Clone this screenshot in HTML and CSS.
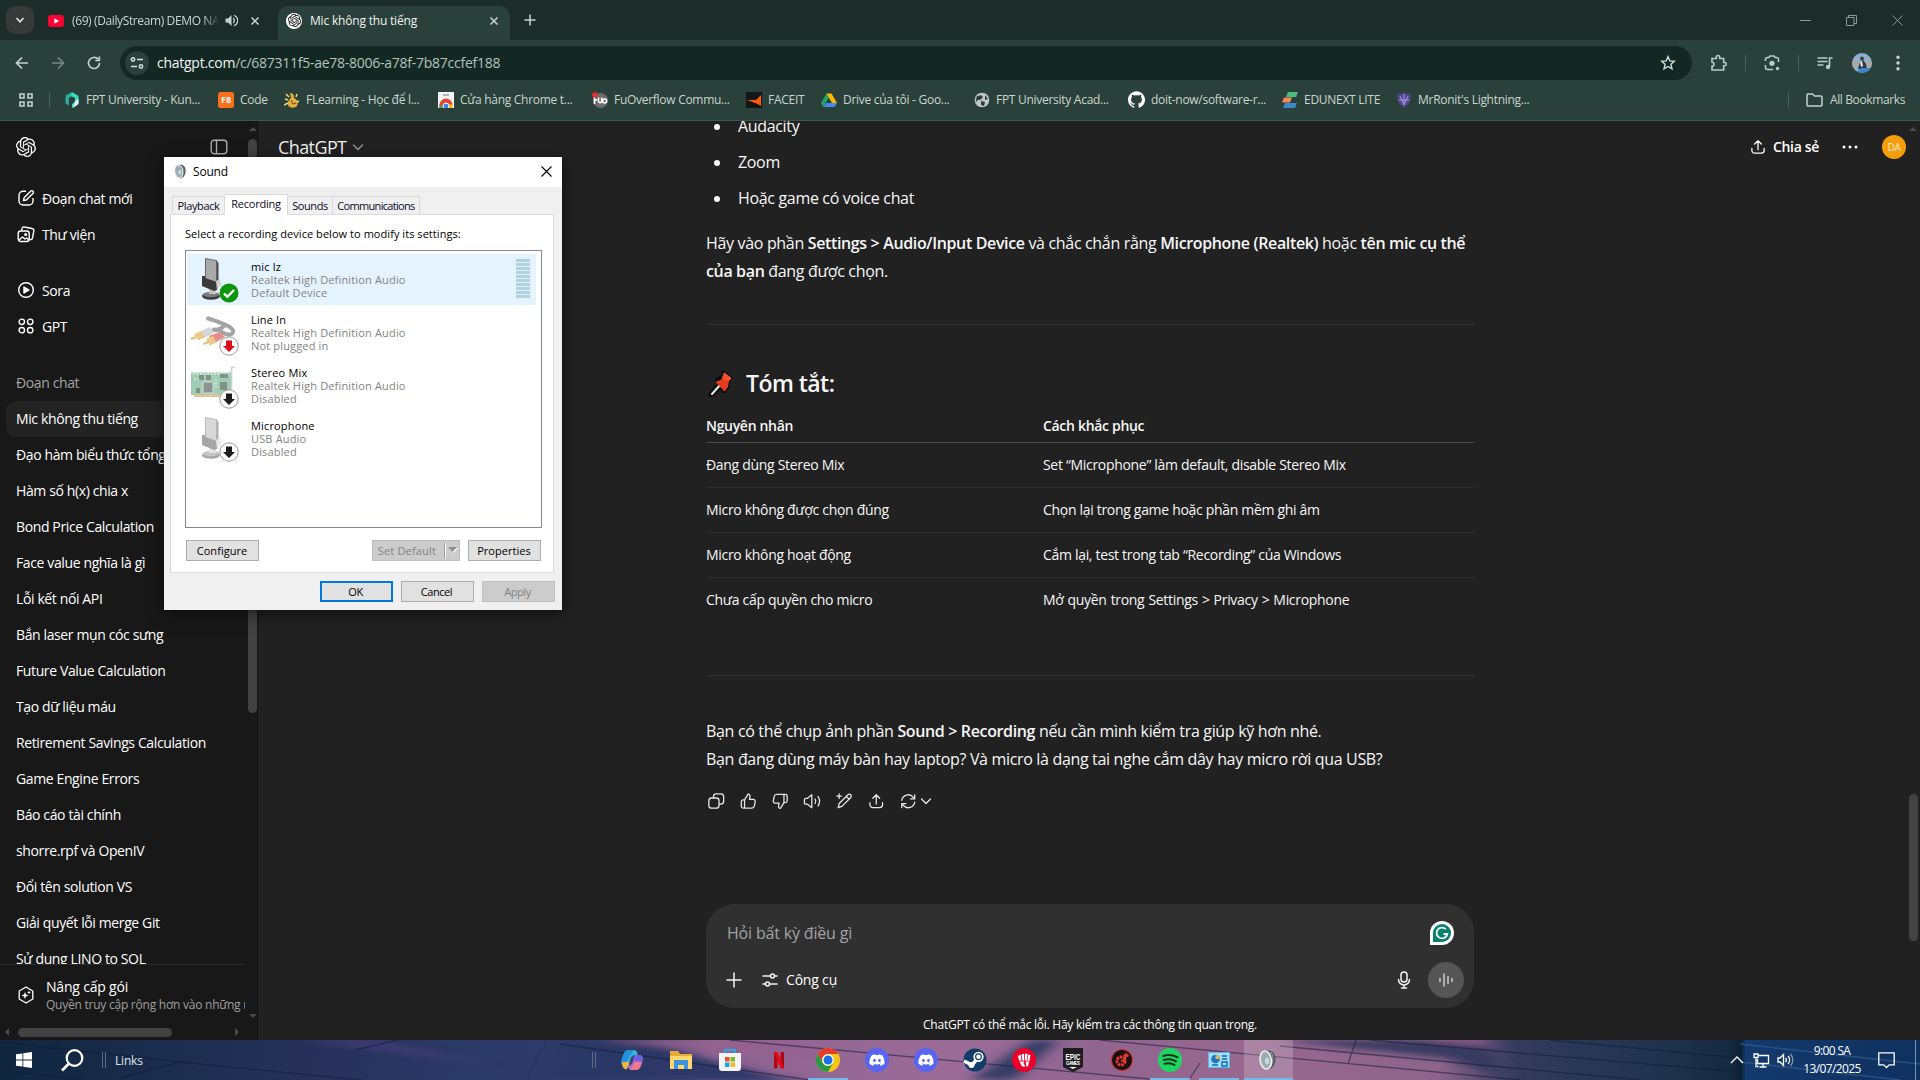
FILE: index.html
```html
<!DOCTYPE html>
<html lang="vi">
<head>
<meta charset="utf-8">
<title>Mic không thu tiếng</title>
<link rel="stylesheet" href="styles.css">
</head>
<body>
<svg class="defs" aria-hidden="true">
  <symbol id="openai" viewBox="0 0 24 24"><path fill="currentColor" d="M22.2819 9.8211a5.9847 5.9847 0 0 0-.5157-4.9108 6.0462 6.0462 0 0 0-6.5098-2.9A6.0651 6.0651 0 0 0 4.9807 4.1818a5.9847 5.9847 0 0 0-3.9977 2.9 6.0462 6.0462 0 0 0 .7427 7.0966 5.98 5.98 0 0 0 .511 4.9107 6.051 6.051 0 0 0 6.5146 2.9001A5.9847 5.9847 0 0 0 13.2599 24a6.0557 6.0557 0 0 0 5.7718-4.2058 5.9894 5.9894 0 0 0 3.9977-2.9001 6.0557 6.0557 0 0 0-.7475-7.0729zm-9.022 12.6081a4.4755 4.4755 0 0 1-2.8764-1.0408l.1419-.0804 4.7783-2.7582a.7948.7948 0 0 0 .3927-.6813v-6.7369l2.02 1.1686a.071.071 0 0 1 .038.052v5.5826a4.504 4.504 0 0 1-4.4945 4.4944zm-9.6607-4.1254a4.4708 4.4708 0 0 1-.5346-3.0137l.142.0852 4.783 2.7582a.7712.7712 0 0 0 .7806 0l5.8428-3.3685v2.3324a.0804.0804 0 0 1-.0332.0615L9.74 19.9502a4.4992 4.4992 0 0 1-6.1408-1.6464zM2.3408 7.8956a4.485 4.485 0 0 1 2.3655-1.9728V11.6a.7664.7664 0 0 0 .3879.6765l5.8144 3.3543-2.0201 1.1685a.0757.0757 0 0 1-.071 0l-4.8303-2.7865A4.504 4.504 0 0 1 2.3408 7.872zm16.5963 3.8558L13.1038 8.364 15.1192 7.2a.0757.0757 0 0 1 .071 0l4.8303 2.7913a4.4944 4.4944 0 0 1-.6765 8.1042v-5.6772a.79.79 0 0 0-.407-.667zm2.0107-3.0231l-.142-.0852-4.7735-2.7818a.7759.7759 0 0 0-.7854 0L9.409 9.2297V6.8974a.0662.0662 0 0 1 .0284-.0615l4.8303-2.7866a4.4992 4.4992 0 0 1 6.6802 4.66zM8.3065 12.863l-2.02-1.1638a.0804.0804 0 0 1-.038-.0567V6.0742a4.4992 4.4992 0 0 1 7.3757-3.4537l-.142.0805L8.704 5.459a.7948.7948 0 0 0-.3927.6813zm1.0976-2.3654l2.602-1.4998 2.6069 1.4998v2.9994l-2.5974 1.4997-2.6067-1.4997Z"/></symbol>
  <symbol id="discord" viewBox="0 0 24 24"><circle cx="12" cy="12" r="12" fill="#5865f2"/><path transform="translate(4.4 4.4) scale(.63)" fill="#fff" d="M20.317 4.3698a19.7913 19.7913 0 00-4.8851-1.5152.0741.0741 0 00-.0785.0371c-.211.3753-.4447.8648-.6083 1.2495-1.8447-.2762-3.68-.2762-5.4868 0-.1636-.3933-.4058-.8742-.6177-1.2495a.077.077 0 00-.0785-.037 19.7363 19.7363 0 00-4.8852 1.515.0699.0699 0 00-.0321.0277C.5334 9.0458-.319 13.5799.0992 18.0578a.0824.0824 0 00.0312.0561c2.0528 1.5076 4.0413 2.4228 5.9929 3.0294a.0777.0777 0 00.0842-.0276c.4616-.6304.8731-1.2952 1.226-1.9942a.076.076 0 00-.0416-.1057c-.6528-.2476-1.2743-.5495-1.8722-.8923a.077.077 0 01-.0076-.1277c.1258-.0943.2517-.1923.3718-.2914a.0743.0743 0 01.0776-.0105c3.9278 1.7933 8.18 1.7933 12.0614 0a.0739.0739 0 01.0785.0095c.1202.099.246.1981.3728.2924a.077.077 0 01-.0066.1276 12.2986 12.2986 0 01-1.873.8914.0766.0766 0 00-.0407.1067c.3604.698.7719 1.3628 1.225 1.9932a.076.076 0 00.0842.0286c1.961-.6067 3.9495-1.5219 6.0023-3.0294a.077.077 0 00.0313-.0552c.5004-5.177-.8382-9.6739-3.5485-13.6604a.061.061 0 00-.0312-.0286zM8.02 15.3312c-1.1825 0-2.1569-1.0857-2.1569-2.419 0-1.3332.9555-2.4189 2.157-2.4189 1.2108 0 2.1757 1.0952 2.1568 2.419 0 1.3332-.9555 2.4189-2.1569 2.4189zm7.9748 0c-1.1825 0-2.1569-1.0857-2.1569-2.419 0-1.3332.9554-2.4189 2.1569-2.4189 1.2108 0 2.1757 1.0952 2.1568 2.419 0 1.3332-.946 2.4189-2.1568 2.4189Z"/></symbol>
  <symbol id="close" viewBox="0 0 10 10"><path d="M1.5 1.5l7 7m0-7l-7 7" stroke="currentColor" stroke-width="1.5"/></symbol>
  <symbol id="share" viewBox="0 0 20 20"><path d="M10 13V3.2M6.3 6.7L10 3l3.7 3.7M3.2 11.5v2.3a3 3 0 0 0 3 3h7.600a3 3 0 0 0 3-3v-2.300" fill="none" stroke="currentColor" stroke-width="1.4" stroke-linecap="round" stroke-linejoin="round"/></symbol>
  <symbol id="chev" viewBox="0 0 12 12"><path d="M1.500 4L6 8.500 10.500 4" fill="none" stroke="currentColor" stroke-width="1.300" stroke-linecap="round"/></symbol>
  <symbol id="speaker" viewBox="0 0 20 24">
    <path d="M8 1.500C15 0 19 4 19 11c0 7-5 12-9 12z" fill="#4c5357"/>
    <path d="M13 3c4 2 5 12-1 18" fill="none" stroke="#8f9699" stroke-width="1.500"/>
    <ellipse cx="8" cy="12" rx="6.500" ry="10.500" transform="rotate(-8 8 12)" fill="#a9b3b5" stroke="#f2f3f3" stroke-width="1.600"/>
    <ellipse cx="8.500" cy="12" rx="4.500" ry="8" transform="rotate(-8 9 12)" fill="#9aa9af"/>
    <ellipse cx="9.500" cy="13" rx="2.500" ry="4" fill="#c3dbe6"/>
  </symbol>
  <symbol id="micdev" viewBox="0 0 50 50">
    <ellipse cx="24" cy="42" rx="9" ry="3.800" fill="#3d3d3d"/><ellipse cx="24" cy="40.600" rx="8" ry="2.600" fill="#7d7d7d"/>
    <path d="M22 33h7v7h-7z" fill="#c4c4c4"/>
    <path d="M18 5l12 1.500 1.500 3V32l-3 1-10.500-5z" fill="#4d4d4d"/>
    <path d="M18.500 4.500l11 2V29l-11-4z" fill="#a9a9a9" stroke="#5e5e5e" stroke-width=".8"/>
    <path d="M15 22l3 0 0 2 12 4 1 3-1 5-3 1-12-5z" fill="#3a3a3a"/><path d="M29 27l4-2 1 6-4 5z" fill="#d0d0d0"/>
  </symbol>
  <symbol id="rca" viewBox="0 0 50 50">
    <path d="M21 11.500c8 2 14 5 19 7 7 3 8 8 3 9-7 1-10-6-16-5M27 23c6 0 8-2 11-5" fill="none" stroke="#a3a3a3" stroke-width="4" stroke-linecap="round"/>
    <path d="M12 25l11-5 4 6-12 6z" fill="#d4d4da"/><path d="M22 29l11-4 5 5-12 7z" fill="#e58d86"/>
    <path d="M7 27.500l7-3.500 3.500 6-6 3.500z" fill="#ecc984"/><path d="M19 32l7-3 3 6-6 3.500z" fill="#ecc984"/>
    <path d="M3.500 31l5-2 1 2-5 2zM16 36l5-2 1 2-5 2z" fill="#dfbd7c"/>
  </symbol>
  <symbol id="card" viewBox="0 0 50 50">
    <path d="M44.500 7v22M44.500 7.500H48" stroke="#d2d2d2" stroke-width="1.600" fill="none"/>
    <path d="M4 12.500h40V35H4z" fill="#9fceb4"/><path d="M7 34.500h28V37H7z" fill="#e5c496"/>
    <path d="M6 14h36M7 19h7M29 19v10M26 24h4" stroke="#d4ecdd" stroke-width="1.500" stroke-dasharray="2 1.500"/>
    <path d="M16 22h10v11H16z" fill="#8c9490" stroke="#d9dfdb"/><path d="M12 15h5v5h-5zM19 15h5v5h-5zM33 22h7v8h-7zM33 14h8v4h-8zM9 28h4v5H9z" fill="#839089"/>
  </symbol>
</svg>

<header class="browser">
  <div class="tabstrip">
    <div class="tabsearch"><svg width="10" height="10" viewBox="0 0 10 10"><path d="M1.500 3L5 6.800 8.500 3" fill="none" stroke="#dfe8e4" stroke-width="1.600"/></svg></div>
    <div class="tab tab-idle">
      <svg width="16" height="16" viewBox="0 0 16 16"><rect y="2" width="16" height="12" rx="3.200" fill="#ff0033"/><path d="M6.300 5.300v5.400L11 8z" fill="#fff"/></svg>
      <span class="tab-title fade">(69) (DailyStream) DEMO NA</span>
      <svg class="tab-audio" width="13" height="13" viewBox="0 0 13 13"><path d="M.5 4.500H3L6.500 1v11L3 8.500H.5z" fill="#c3d3cc"/><path d="M8.300 4a3.500 3.500 0 0 1 0 5M9 1.300a5.500 5.500 0 0 1 0 10.400" fill="none" stroke="#c3d3cc" stroke-width="1.300"/></svg>
      <svg class="x" width="10" height="10"><use href="#close"/></svg>
    </div>
    <div class="tab tab-active">
      <span class="favicon"><svg width="13" height="13"><use href="#openai"/></svg></span>
      <span class="tab-title">Mic không thu tiếng</span>
      <svg class="x" width="10" height="10"><use href="#close"/></svg>
    </div>
    <svg class="newtab" width="12" height="12" viewBox="0 0 12 12"><path d="M6 .5v11M.5 6h11" stroke="#c9d6d0" stroke-width="1.500"/></svg>
    <div class="winctl">
      <svg width="11" height="11" viewBox="0 0 11 11"><path d="M0 5.500h11"/></svg>
      <svg width="11" height="11" viewBox="0 0 11 11"><path d="M.5 2.500h7.500v8H.5zM2.500 2.500v-2h8v8H8"/></svg>
      <svg width="11" height="11" viewBox="0 0 11 11"><path d="M.5.500l10 10m0-10l-10 10"/></svg>
    </div>
  </div>
  <div class="toolbar">
    <div class="nav">
      <svg width="16" height="16" viewBox="0 0 16 16"><path d="M14 8H3M8 2.500L2.500 8 8 13.500"/></svg>
      <svg class="dim" width="16" height="16" viewBox="0 0 16 16"><path d="M2 8h11M8 2.500L13.500 8 8 13.500"/></svg>
      <svg width="16" height="16" viewBox="0 0 16 16"><path d="M13.500 8A5.500 5.500 0 1 1 12 4.200M13.300 1.500V5.500H9.300"/></svg>
    </div>
    <div class="omnibox">
      <span class="site"><svg width="14" height="14" viewBox="0 0 14 14"><path d="M7 3.500h6M1 10.500h6" /><circle cx="3" cy="3.500" r="1.700"/><circle cx="11" cy="10.500" r="1.700"/></svg></span>
      <span class="url"><b>chatgpt.com</b>/c/687311f5-ae78-8006-a78f-7b87ccfef188</span>
      <svg class="star" width="16" height="16" viewBox="0 0 16 16"><path d="M8 1.600l1.800 4.300 4.600.4-3.500 3 1.100 4.600L8 11.500l-4 2.400 1.100-4.600-3.500-3 4.600-.4z" fill="none" stroke="#d2ddd8" stroke-width="1.400"/></svg>
    </div>
    <div class="tools">
      <svg width="18" height="18" viewBox="0 0 18 18"><path d="M2 4.500h4.300V3.200a1.700 1.700 0 0 1 3.400 0v1.300h4v4h1a1.600 1.600 0 0 1 0 3.200h-1v4.300H2v-3.800a2 2 0 0 0 0-4z"/></svg>
      <i></i>
      <svg width="18" height="18" viewBox="0 0 18 18"><path d="M2.500 7V5.500a2 2 0 0 1 2-2h1.300L7 2h4l1.200 1.500h1.300a2 2 0 0 1 2 2V8M2.500 11v2.500a2 2 0 0 0 2 2H10"/><circle cx="9" cy="9.300" r="2.600" fill="#b6cdc3" stroke="none"/><circle cx="14.500" cy="14.500" r="1.700" fill="#b6cdc3" stroke="none"/></svg>
      <i></i>
      <svg width="18" height="18" viewBox="0 0 18 18"><path d="M1.500 4h10M1.500 7.500h10M1.500 11h6M13.500 13V4h3"/><circle cx="12" cy="13" r="2.200" fill="#b6cdc3" stroke="none"/></svg>
      <svg class="me" width="20" height="20" viewBox="0 0 20 20"><clipPath id="c"><circle cx="10" cy="10" r="10"/></clipPath><g clip-path="url(#c)" stroke="none"><path d="M0 0h20v20H0z" fill="#8eafcd"/><path d="M0 9h20v4H0z" fill="#b6a58f"/><path d="M6 16l2-7 3-2 3 4 1 6z" fill="#2d3548"/><path d="M8 9l2-1 1 5-2 1z" fill="#e9edf2"/><circle cx="10" cy="5.500" r="2" fill="#45403f"/><path d="M9 15h11v5H3z" fill="#3b85c8"/></g></svg>
      <svg width="18" height="18" viewBox="0 0 18 18"><g fill="#c9d8d1" stroke="none"><circle cx="9" cy="3.300" r="1.700"/><circle cx="9" cy="9" r="1.700"/><circle cx="9" cy="14.700" r="1.700"/></g></svg>
    </div>
  </div>
  <div class="bookmarks">
    <svg class="apps" width="14" height="14" viewBox="0 0 14 14"><path d="M1 1h4v4H1zM9 1h4v4H9zM1 9h4v4H1zM9 9h4v4H9z" fill="none" stroke="#c3d1cb" stroke-width="1.600"/></svg>
    <i></i>
    <div class="marks">
      <span><svg width="16" height="16" viewBox="0 0 16 16"><path d="M8 0L1.500 3.500v8L5 13.500V6l3-2z" fill="#2fa79b"/><path d="M8 0l6.500 4v7.500L8 16v-4l3-2V6L7 4z" fill="#35dcc0"/><path d="M11 9l3.500-2v5L9 16z" fill="#dff7f2"/></svg>FPT University - Kun...</span>
      <span><svg width="16" height="16" viewBox="0 0 16 16"><rect width="16" height="16" rx="2.500" fill="#f9701c"/><text x="8" y="11.300" text-anchor="middle" class="f8">F8</text></svg>Code</span>
      <span><svg width="16" height="16" viewBox="0 0 16 16"><path d="M6 1c4 0 4 3 4 5 4 2 4 5 3 8-3 3-8 2-9-1-1-4 2-6 3-7z" fill="#e4ae3a"/><path d="M2 2l3 3M1 7l3 1M13 2l-1 3M0 13l4-2M15 9l-2 1" stroke="#f3d680" stroke-width="1.500"/><path d="M7 8l2 4 3-1" stroke="#664917" fill="none"/></svg>FLearning - Học để l...</span>
      <span><svg width="16" height="16" viewBox="0 0 16 16"><path d="M0 0h16v16H0z" fill="#f2f4f5"/><path d="M5 3h6" stroke="#9aa0a6" stroke-width="1.500"/><path d="M1.500 16V13a6.500 6.500 0 0 1 13 0H8a3 3 0 0 0-3 3z" fill="#e54335"/><path d="M10 12.500h4.500V16H10z" fill="#fbbc05"/><path d="M1.500 12l4 4h-4z" fill="#34a853"/><circle cx="8" cy="14" r="3" fill="#4285f4" stroke="#fff"/></svg>Cửa hàng Chrome t...</span>
      <span><svg width="16" height="16" viewBox="0 0 16 16"><circle cx="8.500" cy="8.500" r="7.500" fill="#6b6b6d"/><path d="M2.500 5v7M2.500 8h2.500M6.500 5.500v4a1.700 1.700 0 0 0 3.200 0v-4" stroke="#fff" stroke-width="1.600" fill="none"/><circle cx="12.600" cy="9" r="2" fill="none" stroke="#fff" stroke-width="1.500"/><circle cx="3" cy="3" r="2.800" fill="#ec2d2d"/></svg>FuOverflow Commu...</span>
      <span><svg width="16" height="16" viewBox="0 0 16 16"><path d="M0 0h16v16H0z" fill="#151716"/><path d="M15 3v11l-4.500-2.500L1 8h9z" fill="#ff5a0a"/></svg>FACEIT</span>
      <span><svg width="16" height="16" viewBox="0 0 16 16"><path d="M5.500 1.500L0 11l2.500 4L8 5.500z" fill="#1fa463"/><path d="M5.500 1.500h5L16 11h-5z" fill="#ffba00"/><path d="M5.300 11H16l-2.500 4h-11z" fill="#4688f4"/></svg>Drive của tôi - Goo...</span>
      <span><svg width="16" height="16" viewBox="0 0 16 16"><circle cx="8" cy="8" r="7.300" fill="#c2c6c9"/><path d="M2.500 4.500L7 3l2 2-2 2.500-3 .5-2 2zM7 9l4 1-1 4-3-1zM11 3l3 4-3 1z" fill="#2a4039"/></svg>FPT University Acad...</span>
      <span><svg width="17" height="17" viewBox="0 0 24 24"><path fill="#fff" d="M12 .297c-6.630 0-12 5.373-12 12 0 5.303 3.438 9.800 8.205 11.385.6.113.82-.258.82-.577 0-.285-.01-1.040-.015-2.040-3.338.724-4.042-1.610-4.042-1.610C4.422 18.070 3.633 17.700 3.633 17.700c-1.087-.744.084-.729.084-.729 1.205.084 1.838 1.236 1.838 1.236 1.070 1.835 2.809 1.305 3.495.998.108-.776.417-1.305.76-1.605-2.665-.3-5.466-1.332-5.466-5.930 0-1.310.465-2.380 1.235-3.220-.135-.303-.54-1.523.105-3.176 0 0 1.005-.322 3.300 1.230.96-.267 1.980-.399 3-.405 1.020.006 2.040.138 3 .405 2.280-1.552 3.285-1.230 3.285-1.230.645 1.653.24 2.873.12 3.176.765.84 1.230 1.910 1.230 3.220 0 4.610-2.805 5.625-5.475 5.920.42.36.81 1.096.81 2.220 0 1.606-.015 2.896-.015 3.286 0 .315.21.69.825.57C20.565 22.092 24 17.592 24 12.297c0-6.627-5.373-12-12-12"/></svg>doit-now/software-r...</span>
      <span><svg width="16" height="16" viewBox="0 0 16 16"><path d="M6 0h10l-2 5H4z" fill="#46bd7c"/><path d="M2 5.500h8l-2 5H0z" fill="#fb8a55"/><path d="M3 11h12l-2 5H1z" fill="#3a87cc"/></svg>EDUNEXT LITE</span>
      <span><svg width="16" height="16" viewBox="0 0 16 16"><path d="M8 0l2 2 5 0-1 8-6 6-6-6-1-8 5 0z" fill="#51478c"/><path d="M4 4l4 9 4-9M8 2v9M3 8h10" stroke="#a99be6" fill="none"/></svg>MrRonit's Lightning...</span>
    </div>
    <div class="allmarks"><i></i><svg width="17" height="14" viewBox="0 0 17 14"><path d="M1 2.500V12a1 1 0 0 0 1 1h13a1 1 0 0 0 1-1V4a1 1 0 0 0-1-1H8.500L6.500 1H2a1 1 0 0 0-1 1z" fill="none" stroke="#c3d1cb" stroke-width="1.500"/></svg>All Bookmarks</div>
  </div>
</header>

<div class="app">
  <aside class="sidebar">
    <div class="side-main">
      <div class="side-head">
        <svg width="20" height="20"><use href="#openai"/></svg>
        <svg width="18" height="16" viewBox="0 0 18 16"><rect x="1.200" y="1.200" width="15.600" height="13.600" rx="3" fill="none" stroke="#afafaf" stroke-width="1.400"/><path d="M6.500 1.500v13" stroke="#afafaf" stroke-width="1.400"/></svg>
      </div>
      <nav class="side-list menu">
        <a><svg viewBox="0 0 18 18"><path d="M9 2.200H6a4 4 0 0 0-4 4V12a4 4 0 0 0 4 4h6a4 4 0 0 0 4-4V9M6.500 11.500l.6-2.800L13.600 2.200a1.600 1.600 0 0 1 2.300 2.300L9.300 11z"/></svg>Đoạn chat mới</a>
        <a><svg viewBox="0 0 18 18"><rect x="1.200" y="6" width="11" height="10.500" rx="2.500"/><path d="M4.500 5.500l.5-2A2 2 0 0 1 7.500 2l7.500 1.500A2 2 0 0 1 16.800 6l-1.300 7a2 2 0 0 1-2.500 1.500M2 15l3.500-3 2.500 2 1.500-1 2.500 2"/><circle cx="8.700" cy="9.500" r=".9"/></svg>Thư viện</a>
      </nav>
      <nav class="side-list menu">
        <a><svg viewBox="0 0 18 18"><circle cx="9" cy="9" r="7.300"/><path d="M7 6l5 3-5 3z" fill="#fff"/></svg>Sora</a>
        <a><svg viewBox="0 0 18 18"><circle cx="4.800" cy="4.800" r="2.700"/><circle cx="13.200" cy="4.800" r="2.700"/><circle cx="4.800" cy="13.200" r="2.700"/><circle cx="13.200" cy="13.200" r="2.700"/></svg>GPT</a>
      </nav>
      <div class="side-list chats">
        <h2>Đoạn chat</h2>
        <a class="on">Mic không thu tiếng</a><a>Đạo hàm biểu thức tổng</a><a>Hàm số h(x) chia x</a><a>Bond Price Calculation</a><a>Face value nghĩa là gì</a><a>Lỗi kết nối API</a><a>Bắn laser mụn cóc sưng</a><a>Future Value Calculation</a><a>Tạo dữ liệu máu</a><a>Retirement Savings Calculation</a><a>Game Engine Errors</a><a>Báo cáo tài chính</a><a>shorre.rpf và OpenIV</a><a>Đổi tên solution VS</a><a>Giải quyết lỗi merge Git</a><a>Sử dụng LINQ to SQL</a>
      </div>
      <div class="upgrade">
        <svg width="18" height="18" viewBox="0 0 18 18"><path d="M9 1l6.800 4v8L9 17l-6.800-4V5z" fill="none" stroke="#fff" stroke-width="1.300" stroke-linejoin="round"/><path d="M8 6l1 2.500L11.500 9.500 9 10.500 8 13l-1-2.500L4.500 9.500 7 8.500zM12 4.500l.6 1.400 1.400.6-1.400.6L12 8.500l-.6-1.400-1.400-.6 1.400-.6z" fill="#fff"/></svg>
        <div><b>Nâng cấp gói</b><small>Quyền truy cập rộng hơn vào những n</small></div>
      </div>
      <div class="hscroll"><s class="left"></s><u></u><s class="right-arrow"></s></div>
    </div>
    <div class="vscroll"><s class="up"></s><u></u><s class="down"></s></div>
  </aside>

  <main class="main">
    <div class="title">ChatGPT <svg width="12" height="12"><use href="#chev"/></svg></div>
    <div class="column">
      <article class="talk">
        <ul><li>Audacity</li><li>Zoom</li><li>Hoặc game có voice chat</li></ul>
        <p>Hãy vào phần <b>Settings &gt; Audio/Input Device</b> và chắc chắn rằng <b>Microphone (Realtek)</b> hoặc <b>tên mic cụ thể<br>của bạn</b> đang được chọn.</p>
        <hr>
        <h1><svg width="32" height="28" viewBox="0 0 32 28"><path d="M17 3l8 6-2 3-1 6-4 5-4-5-8 9-2 .500.500-3 8-9-2-5 6-3z" fill="#111" stroke="#090909" stroke-width="3" stroke-linejoin="round"/><path d="M6 25l8-9" stroke="#e4e6e8" stroke-width="2.200" stroke-linecap="round"/><path d="M18 3.500l7.500 5.500-2.500 3-1 6-3.500 4.500L9.500 13l6-2.500z" fill="#e63c1d"/><path d="M18 3.500l7.500 5.500-2.500 3-7-2z" fill="#f2532f"/></svg>Tóm tắt:</h1>
        <table>
          <tr><th>Nguyên nhân</th><th>Cách khắc phục</th></tr>
          <tr><td>Đang dùng Stereo Mix</td><td>Set “Microphone” làm default, disable Stereo Mix</td></tr>
          <tr><td>Micro không được chọn đúng</td><td>Chọn lại trong game hoặc phần mềm ghi âm</td></tr>
          <tr><td>Micro không hoạt động</td><td>Cắm lại, test trong tab “Recording” của Windows</td></tr>
          <tr><td>Chưa cấp quyền cho micro</td><td class="path">Mở quyền trong Settings &gt; Privacy &gt; Microphone</td></tr>
        </table>
        <hr class="second">
        <p class="last">Bạn có thể chụp ảnh phần <b>Sound &gt; Recording</b> nếu cần mình kiểm tra giúp kỹ hơn nhé.<br>Bạn đang dùng máy bàn hay laptop? Và micro là dạng tai nghe cắm dây hay micro rời qua USB?</p>
        <div class="actions">
          <svg viewBox="0 0 20 20"><rect x="2" y="6.500" width="11" height="11" rx="3"/><path d="M7 6.300V5a3 3 0 0 1 3-3h5a3 3 0 0 1 3 3v5a3 3 0 0 1-3 3h-1.700"/></svg>
          <svg viewBox="0 0 20 20"><path d="M6 8.500l3.800-6.200c1.800 0 2.400 1.500 2 3L11.300 8h4.200a2 2 0 0 1 2 2.400l-1 5a2.600 2.600 0 0 1-2.500 2.100H6zM6 17.500H4.500a2 2 0 0 1-2-2v-5a2 2 0 0 1 2-2H6"/></svg>
          <svg viewBox="0 0 20 20"><path d="M14 11.500l-3.800 6.200c-1.800 0-2.400-1.500-2-3l.5-2.700H4.500a2 2 0 0 1-2-2.400l1-5A2.600 2.600 0 0 1 6 2.500h8zM14 2.500h1.500a2 2 0 0 1 2 2v5a2 2 0 0 1-2 2H14"/></svg>
          <svg viewBox="0 0 20 20"><path d="M1.500 8.500c0-1 .5-1.500 1.500-1.500h1.500L9.500 3v14l-5-4H3c-1 0-1.500-.5-1.500-1.500zM13 7.500c1 1.500 1 3.500 0 5M16.300 5c2 3 2 7 0 10"/></svg>
          <svg viewBox="0 0 20 20"><path d="M3.500 17l1-4.500L14 3a2.100 2.100 0 0 1 3 3L7.500 15.500zM12.500 5l2.800 2.800M4.500 2v5M2 4.500h5"/></svg>
          <svg viewBox="0 0 20 20"><use href="#share"/></svg>
          <svg viewBox="0 0 20 20"><path d="M3 9a7 7 0 0 1 12.500-3.200L17 7.500M17 3v4.500h-4.500M17 11a7 7 0 0 1-12.500 3.200L3 12.500M3 17v-4.500h4.500"/></svg>
          <svg class="small" viewBox="0 0 12 12"><use href="#chev"/></svg>
        </div>
      </article>
      <div class="composer">
        <div class="ask"><span>Hỏi bất kỳ điều gì</span><svg width="24" height="24" viewBox="0 0 24 24"><path d="M0 24V12a12 12 0 1 1 12 12z" fill="#fff"/><path d="M3 21v-9a9 9 0 1 1 9 9z" fill="#057f6d"/><path d="M15.800 8.200A5.400 5.400 0 1 0 17.300 13H13.500" fill="none" stroke="#fff" stroke-width="1.800"/></svg></div>
        <div class="row">
          <svg width="16" height="16" viewBox="0 0 16 16"><path d="M8 1v14M1 8h14"/></svg>
          <svg class="sliders" width="16" height="16" viewBox="0 0 16 16"><path d="M1 4h7.500M12.500 4H15M1 12h2.500M7.500 12H15"/><circle cx="10.500" cy="4" r="2"/><circle cx="5.500" cy="12" r="2"/></svg>
          <span>Công cụ</span>
          <svg class="mic" width="16" height="18" viewBox="0 0 16 18"><rect x="5" y="1" width="6" height="10" rx="3"/><path d="M2.500 8.500a5.500 5.500 0 0 0 11 0M8 14v3M5.500 17h5"/></svg>
          <div class="voice"><svg width="16" height="16" viewBox="0 0 16 16"><path d="M2 6.500v3M6 2v12M10 4.500v7M14 6.500v3"/></svg></div>
        </div>
      </div>
      <footer>ChatGPT có thể mắc lỗi. Hãy kiểm tra các thông tin quan trọng.</footer>
    </div>
    <div class="right">
      <div class="headacts"><svg width="18" height="18"><use href="#share"/></svg><b>Chia sẻ</b><svg class="dots" width="16" height="4" viewBox="0 0 16 4"><g fill="#fff"><circle cx="2" cy="2" r="1.500"/><circle cx="8" cy="2" r="1.500"/><circle cx="14" cy="2" r="1.500"/></g></svg><span class="avatar">DA</span></div>
      <div class="vscroll page"><s class="up"></s><u></u></div>
    </div>
  </main>
</div>

<section class="dialog">
  <div class="caption"><svg width="14" height="15"><use href="#speaker"/></svg><span>Sound</span><svg width="11" height="11" viewBox="0 0 11 11"><path d="M.5.500l10 10m0-10l-10 10" stroke="#000" stroke-width="1.100"/></svg></div>
  <div class="tabs"><span>Playback</span><span class="sel">Recording</span><span>Sounds</span><span>Communications</span></div>
  <div class="panel">
    <p>Select a recording device below to modify its settings:</p>
    <div class="devices">
      <div class="dev sel"><div class="pic"><svg><use href="#micdev"/></svg><svg class="badge" viewBox="0 0 20 20"><circle cx="10" cy="10" r="9.500" fill="#0c960c"/><path d="M5 10.500l3.300 3.300L15 7" fill="none" stroke="#fff" stroke-width="2.400"/></svg></div><div class="txt"><b>mic lz</b>Realtek High Definition Audio<br>Default Device</div><div class="meter"></div></div>
      <div class="dev"><div class="pic"><svg><use href="#rca"/></svg><svg class="badge" viewBox="0 0 20 20"><circle cx="10" cy="10" r="9.200" fill="#fff" stroke="#999"/><path d="M7 4.500h6V10h3l-6 6-6-6h3z" fill="#d80f16"/></svg></div><div class="txt"><b>Line In</b>Realtek High Definition Audio<br>Not plugged in</div></div>
      <div class="dev"><div class="pic"><svg><use href="#card"/></svg><svg class="badge" viewBox="0 0 20 20"><circle cx="10" cy="10" r="9.200" fill="#fff" stroke="#999"/><path d="M7 4.500h6V10h3l-6 6-6-6h3z" fill="#1d1d1d"/></svg></div><div class="txt"><b>Stereo Mix</b>Realtek High Definition Audio<br>Disabled</div></div>
      <div class="dev"><div class="pic"><svg class="off"><use href="#micdev"/></svg><svg class="badge" viewBox="0 0 20 20"><circle cx="10" cy="10" r="9.200" fill="#fff" stroke="#999"/><path d="M7 4.500h6V10h3l-6 6-6-6h3z" fill="#1d1d1d"/></svg></div><div class="txt"><b>Microphone</b>USB Audio<br>Disabled</div></div>
    </div>
    <div class="btns"><span class="btn">Configure</span><span class="btn grey split">Set Default<em></em><svg width="10" height="6" viewBox="0 0 10 6"><path d="M1 1h9L5.500 6z" fill="#fff"/><path d="M0 0h9L4.500 5z" fill="#8d8d8d"/></svg></span><span class="btn">Properties</span></div>
  </div>
  <div class="okrow"><span class="btn ok">OK</span><span class="btn">Cancel</span><span class="btn grey">Apply</span></div>
</section>

<div class="taskbar">
  <svg class="wall" width="1920" height="40" viewBox="0 0 1920 40" preserveAspectRatio="none">
    <defs>
      <linearGradient id="w"><stop offset="0" stop-color="#10263e"/><stop offset=".1" stop-color="#1d2e51"/><stop offset=".16" stop-color="#273059"/><stop offset=".25" stop-color="#2b3a68"/><stop offset=".33" stop-color="#333a6c"/><stop offset=".37" stop-color="#8d6290"/><stop offset=".5" stop-color="#9c6c98"/><stop offset=".57" stop-color="#90658f"/><stop offset=".65" stop-color="#98688f"/><stop offset=".75" stop-color="#8d648b"/><stop offset=".79" stop-color="#343a5c"/><stop offset=".86" stop-color="#20344f"/><stop offset=".9" stop-color="#162b42"/><stop offset=".907" stop-color="#0c2034"/><stop offset=".909" stop-color="#14396c"/><stop offset="1" stop-color="#0f3160"/></linearGradient>
      <filter id="soft" x="-20%" y="-100%" width="140%" height="300%"><feGaussianBlur stdDeviation="8 3"/></filter>
    </defs>
    <path d="M0 0h1920v40H0z" fill="url(#w)"/>
    <g filter="url(#soft)">
      <path d="M560 0l70 0 160 40H540z" fill="#2c3765"/><path d="M600 0h180l80 22z" fill="#94628f"/>
      <path d="M640 16l170 26H660z" fill="#2e3967"/>
      <path d="M1030 0h30l-45 40h-45z" fill="#363c66"/>
      <path d="M1275 0h200l20 14 20 26-70-22z" fill="#383b60"/><path d="M1420 0h70l-8 5z" fill="#9a5f97"/>
      <path d="M300 0h80l120 26z" fill="#3d3a72"/>
    </g>
    <g fill="none" stroke="#141c38" stroke-opacity=".55" stroke-width="1.300"><path d="M0 2l180 20 300 30M120 38l60-16M355 10l60-14M560 4l250 36M730 0l430 40M1100 0l420 40M1190 38l10-15M1348 24l8-24M1370 0l370 32M1280 6l360 34M1550 0l190 18M0 30l100 12"/><path d="M1740 4l180 20M1740 22l160 18" stroke="#3c6a9e"/></g>
  </svg>
  <div class="tb-left">
    <svg width="16" height="16" viewBox="0 0 16 16"><path d="M0 2.300L6.500 1.400v6.200H0zM7.300 1.300L16 0v7.600H7.300zM0 8.400h6.500v6.200L0 13.700zM7.300 8.400H16V16l-8.700-1.300z" fill="#fff"/></svg>
    <svg width="23" height="23" viewBox="0 0 23 23"><circle cx="13.500" cy="9" r="7.800" fill="none" stroke="#fff" stroke-width="2.200"/><path d="M8 14.500L1 21.500" stroke="#fff" stroke-width="2.600"/></svg>
    <i class="grip"></i><span>Links</span>
  </div>
  <i class="grip mid"></i>
  <div class="tb-apps">
    <span><svg viewBox="0 0 24 24"><path d="M8 2h6l3 5-4 1-4 10H4C0 17 1 13 2 10 4 4 5 2 8 2z" fill="#2490e0"/><path d="M14 2c3 0 3 3 4 5h-6L9 17H4z" fill="#35b9c9"/><path d="M2 14h8l-3 7c-3 1-5-2-5-7z" fill="#efb63a"/><path d="M16 22h-6l-3-4 4-1 4-10h5c4 1 3 5 2 8-2 6-3 7-6 7z" fill="#a968d8"/><path d="M12 12l3-5h5c3 1 3 4 2 7z" fill="#725ee0"/><path d="M10 22l5-8h7c-2 6-3 8-6 8z" fill="#f2798b"/><path d="M11 9h3l-2 7h-3z" fill="#4a3f75"/></svg></span>
    <span><svg viewBox="0 0 24 24"><path d="M1 3h8l2 3h12v15H1z" fill="#e9ab37"/><path d="M1 8h22v13H1z" fill="#ffd76c"/><path d="M5 12h14v9h-4v-4H9v4H5z" fill="#3b94dd"/></svg></span>
    <span><svg viewBox="0 0 24 24"><path d="M7 6V2h10v4" fill="none" stroke="#2aa9ea" stroke-width="2"/><path d="M1 5h22v15a3 3 0 0 1-3 3H4a3 3 0 0 1-3-3z" fill="#f2f3f4"/><path d="M7 9h4.500v4.500H7z" fill="#ef4e2b"/><path d="M12.500 9H17v4.500h-4.500z" fill="#7db72f"/><path d="M7 14.500h4.500V19H7z" fill="#20a1e8"/><path d="M12.500 14.500H17V19h-4.500z" fill="#fbb81c"/></svg></span>
    <span><svg viewBox="0 0 24 24"><path d="M7 4h3.500v16L7 20.500zM13.500 4H17v16.500l-3.500-.5z" fill="#b1060f"/><path d="M7 4h3.500L17 20.500l-3.700-.5z" fill="#e50914"/></svg></span>
    <span class="run"><svg viewBox="0 0 24 24"><circle cx="12" cy="12" r="12" fill="#f9c513"/><path d="M1.600 6A12 12 0 0 1 22.400 6H12a6 6 0 0 0-5.200 9z" fill="#e33b2e"/><path d="M1.600 6A12 12 0 0 0 12 24l5.200-9a6 6 0 0 1-10.400 0z" fill="#279847"/><circle cx="12" cy="12" r="5.800" fill="#fff"/><circle cx="12" cy="12" r="4.500" fill="#1b72e8"/></svg></span>
    <span><svg><use href="#discord"/></svg></span>
    <span><svg><use href="#discord"/></svg></span>
    <span><svg viewBox="0 0 24 24"><circle cx="12" cy="12" r="11.500" fill="#123d68"/><path d="M1 13l8 4 6-7" fill="none" stroke="#fff" stroke-width="3.500"/><circle cx="15.500" cy="8.800" r="4.300" fill="#123d68" stroke="#fff" stroke-width="1.700"/><circle cx="15.500" cy="8.800" r="2.300" fill="#fff"/><circle cx="8.500" cy="17" r="3" fill="#fff"/></svg></span>
    <span><svg viewBox="0 0 24 24"><circle cx="12" cy="12" r="12" fill="#eb0029"/><path d="M6 8l2.800-1.500.7 6H7zM9.600 6.300l2.500-.5.2 6.700h-2zM13 5.800h2.500l-.5 6.700h-2zM16.200 6.300l2.300.9-1.200 6h-1.800zM7.500 13.500h5l-1 1.800 2 3.200H10zM13.500 13.500l3.500.3-1 4.700h-1.500z" fill="#fff"/></svg></span>
    <span><svg viewBox="0 0 24 24"><path d="M2 0h20v19l-10 5-10-5z" fill="#1d1d20"/><text x="12" y="11.500" text-anchor="middle" class="epic" textLength="15" lengthAdjust="spacingAndGlyphs">EPIC</text><text x="12" y="16.500" text-anchor="middle" class="games" textLength="14">GAMES</text><path d="M8 19h8l-4 2z" fill="#fff"/></svg></span>
    <span><svg viewBox="0 0 24 24"><circle cx="12" cy="12" r="10.500" fill="#161213" stroke="#e42a20" stroke-width="1"/><circle cx="11" cy="13" r="4" fill="none" stroke="#e8392c" stroke-width="3" stroke-dasharray="2.600 .8"/><path d="M11 13c3 0 5-2 5-6M13.500 8.500L16 6l2.500 2.500" stroke="#e8392c" stroke-width="1.800" fill="none"/></svg></span>
    <span class="run"><svg viewBox="0 0 24 24"><circle cx="12" cy="12" r="12" fill="#1ed760"/><path d="M5 8c5-1.500 10-1 14.500 1.300M5.800 12c4-1.200 8.500-.8 12.200 1.300M6.500 15.700c3.500-1 7-.6 10 1.200" fill="none" stroke="#12341f" stroke-width="2" stroke-linecap="round"/></svg></span>
    <span class="run"><svg viewBox="0 0 24 24"><path d="M1 4h22v16H1z" fill="#5cb7ee"/><path d="M2 5h20v14H2z" fill="#a5dcf8"/><circle cx="8.500" cy="11" r="4.300" fill="#1778c8"/><path d="M8.500 11V6.700A4.300 4.300 0 0 1 12.800 11z" fill="#f3b23b"/><path d="M15 8h5M15 11h5M5 17h6M15 14v4h5v-4z" stroke="#1269aa" stroke-width="1.400" fill="none"/></svg></span>
    <span class="run cur"><svg viewBox="0 0 24 24"><use href="#speaker" x="2" y="1.500" width="19" height="21"/></svg></span>
  </div>
  <div class="tray">
    <svg width="14" height="8" viewBox="0 0 14 8"><path d="M1 7l6-6 6 6"/></svg>
    <svg class="net" width="17" height="15" viewBox="0 0 17 15"><path d="M5.500 2.500h10v8H4.500V6M10 10.500v3M6.500 14h7M1 1h4v3.500H1zM3 4.500v9h2.500"/></svg>
    <svg width="17" height="14" viewBox="0 0 17 14"><path d="M1 5h2l3.500-3.500v11L3 9H1zM8.500 5a3 3 0 0 1 0 4M11 3a6 6 0 0 1 0 8"/><path d="M13.500 1a9 9 0 0 1 0 12" opacity=".5"/></svg>
    <div class="clock"><span>9:00 SA</span><span>13/07/2025</span></div>
    <svg class="note" width="17" height="17" viewBox="0 0 17 17"><path d="M.8.800h15.400v12h-5L8.500 15.500 5.800 12.800h-5z"/></svg>
    <i></i>
  </div>
</div>
</body>
</html>
```
FILE: styles.css
```css
* { box-sizing: border-box; }
body {
  margin: 0; width: 1920px; height: 1080px; overflow: hidden; position: relative;
  display: flex; flex-direction: column; background: #212121; color: #fff;
  font: 14px "Open Sans", "Noto Sans", sans-serif;
}
svg { flex: none; display: block; }
i, s, u, em { font-style: normal; text-decoration: none; }
.defs { position: absolute; width: 0; height: 0; }

/* browser chrome */
.browser { flex: none; height: 121px; background: #2a403a; border-bottom: 1px solid #42544e; color: #c9d6d0; font-size: 12px; letter-spacing: -.28px; }
.tabstrip { height: 40px; background: #1c2d29; display: flex; align-items: flex-end; padding-left: 6px; }
.tabsearch { width: 28px; height: 28px; border-radius: 9px; background: #373a38; display: grid; place-items: center; margin-bottom: 6px; }
.tab { height: 34px; display: flex; align-items: center; letter-spacing: -.19px; white-space: nowrap; }
.tab-idle { width: 244px; padding: 4px 0 9px 14px; }
.tab-active { width: 232px; background: #2a403a; border-radius: 10px 10px 0 0; padding: 4px 11px 9px 8px; color: #eef3f1; }
.tab-title { margin-left: 8px; flex: 1; }
.fade { flex: none; width: 148px; overflow: hidden; letter-spacing: -.38px; -webkit-mask: linear-gradient(90deg, #000 88%, transparent); mask: linear-gradient(90deg, #000 88%, transparent); }
.tab-audio { margin: 0 12px 0 5px; }
.x { color: #c9d6d0; }
.favicon { width: 16px; height: 16px; border-radius: 50%; background: #fff; color: #111; display: grid; place-items: center; }
.newtab { margin: 0 0 14px 14px; }
.winctl { margin-left: auto; display: flex; gap: 35px; padding: 0 17px 14px 0; }
.winctl svg { fill: none; stroke: #8b9a95; }
.toolbar { height: 46px; display: flex; align-items: center; padding-left: 14px; }
.nav { display: flex; gap: 20px; width: 106px; }
.nav svg { fill: none; stroke: #c3d3cc; stroke-width: 1.700; }
.nav .dim { opacity: .5; }
.omnibox { width: 1572px; height: 34px; border-radius: 17px; background: #132823; display: flex; align-items: center; padding: 0 16px 0 5px; }
.site { width: 24px; height: 24px; border-radius: 50%; background: #2a403a; display: grid; place-items: center; }
.site svg { fill: none; stroke: #d5e0db; stroke-width: 1.500; }
.url { flex: 1; margin-left: 8px; font-size: 14px; letter-spacing: -.26px; color: #b4c2bc; padding-bottom: 1px; }
.url b { font-weight: 400; color: #f1f5f3; }
.tools { flex: 1; display: flex; align-items: center; padding-left: 18px; }
.tools svg { fill: none; stroke: #b6cdc3; stroke-width: 1.600; }
.tools i, .allmarks i { width: 1px; height: 16px; background: #4c615a; margin: 0 17px; }
.tools .me { margin: 0 17px 0 18px; }
.tools svg:last-child { margin-left: 0; }
.bookmarks { height: 33px; padding: 1px 15px 7px 19px; display: flex; align-items: center; }
.bookmarks > i { width: 1px; height: 16px; background: #4c615a; margin: 0 14px 0 16px; }
.marks { display: grid; grid-template-columns: 154px 66px 154px 154px 154px 75px 153px 154px 154px 114px 150px; }
.marks span { display: flex; align-items: center; gap: 6px; white-space: nowrap; }
.allmarks { margin-left: auto; display: flex; align-items: center; gap: 7px; white-space: nowrap; letter-spacing: -.38px; }
.allmarks i { margin: 0 10px 0 0; }
.f8 { font: 700 9px "Open Sans", sans-serif; fill: #fff; letter-spacing: 0; }

/* page */
.app { flex: 1; min-height: 0; display: flex; }
.sidebar { width: 260px; flex: none; background: #181818; border-right: 1px solid #262626; display: flex; letter-spacing: -.38px; }
.side-main { width: 245px; display: flex; flex-direction: column; }
.side-head { height: 52px; display: flex; justify-content: space-between; align-items: center; padding: 0 17px 0 16px; }
.side-list { display: flex; flex-direction: column; }
.side-list a { height: 36px; flex: none; display: flex; align-items: center; white-space: nowrap; padding: 0 0 2px 10px; margin-left: 6px; width: 247px; overflow: hidden; }
.menu { margin-top: 8px; }
.menu + .menu { margin-top: 20px; }
.menu a { gap: 7px; padding-left: 11px; }
.menu svg { width: 18px; height: 18px; fill: none; stroke: #fff; stroke-width: 1.400; stroke-linejoin: round; }
.chats { flex: 1; min-height: 0; overflow: hidden; margin-top: 20px; }
.chats h2 { margin: 0; height: 36px; flex: none; padding-left: 16px; font: inherit; line-height: 36px; color: #a5a5a5; }
.chats .on { background: #232323; border-radius: 10px; }
.upgrade { height: 60px; flex: none; border-top: 1px solid #2b2b2b; padding-left: 17px; display: flex; align-items: center; gap: 11px; overflow: hidden; }
.upgrade div { display: flex; flex-direction: column; white-space: nowrap; margin-top: 3px; }
.upgrade b { font-weight: 500; line-height: 18px; letter-spacing: -.2px; }
.upgrade small { font-size: 12px; line-height: 18px; color: #9f9f9f; letter-spacing: -.24px; }
.hscroll { height: 16px; flex: none; display: flex; align-items: center; padding: 0 6px 0 5px; }
.hscroll u { width: 154px; height: 9px; border-radius: 5px; background: #424242; margin-left: 9px; }
s { width: 0; height: 0; border: 4.5px solid transparent; flex: none; }
.left { border-left: 0; border-right-color: #4a4a4a; }
.right-arrow { border-right: 0; border-left-color: #4a4a4a; margin-left: auto; }
.vscroll { width: 15px; display: flex; flex-direction: column; align-items: center; padding: 6px 0 22px 1px; }
.up { border-top: 0; border-bottom-color: #4a4a4a; }
.down { border-bottom: 0; border-top-color: #4a4a4a; margin-top: auto; }
.vscroll u { width: 9px; height: 574px; border-radius: 5px; background: #424242; margin-top: 8px; }

.main { flex: 1; display: grid; grid-template-columns: 446px 768px 446px; }
.title { display: flex; align-items: center; gap: 6px; height: 52px; padding-left: 18px; font-size: 18px; letter-spacing: -.6px; color: #f0f0f0; }
.title svg { color: #999; }
.column { display: flex; flex-direction: column; min-height: 0; height: 919px; }
.talk { flex: 1; min-height: 0; overflow: hidden; font-size: 16px; line-height: 28px; letter-spacing: -.33px; color: #f7f7f7; }
.talk ul { margin: -9px 0 0; padding: 0; list-style: none; }
.talk li { height: 28px; margin-bottom: 8px; padding-left: 8px; display: flex; align-items: center; gap: 18px; }
.talk li::before { content: ""; width: 6px; height: 6px; border-radius: 50%; background: #f7f7f7; margin-top: 1px; }
.talk p { margin: 17px 0 0; white-space: nowrap; }
.talk b, .talk th { font-weight: 600; }
.talk b { letter-spacing: -.36px; }
.talk hr { margin: 39px 0 0; border: 0; height: 1px; background: #2f2f2f; }
.talk h1 { margin: 42px 0 0; font-size: 23px; font-weight: 600; line-height: 32px; letter-spacing: -.55px; display: flex; align-items: center; gap: 8px; }
.talk table { width: 100%; border-collapse: collapse; margin-top: 11px; font-size: 14px; line-height: 20px; letter-spacing: -.31px; }
.talk th, .talk td { text-align: left; padding: 0; }
.talk th { height: 32px; padding-bottom: 0; border-bottom: 1px solid #4b4b4b; }
.talk td { height: 45px; border-bottom: 1px solid #2e2e2e; }
.talk tr:last-child td { border: 0; }
.talk th:first-child { width: 337px; }
.talk .path { word-spacing: .7px; }
.talk .second { margin-top: 53px; }
.talk .last { margin-top: 41px; }
.actions { display: flex; margin-top: 19px; gap: 13.500px; padding-left: 1px; }
.actions svg { width: 18.500px; height: 18.500px; fill: none; stroke: #e6e6e6; stroke-width: 1.400; stroke-linecap: round; stroke-linejoin: round; color: #e6e6e6; }
.actions .small { width: 12px; height: 18px; margin-left: -11px; }
.composer { height: 104px; flex: none; border-radius: 28px; background: #303030; display: flex; flex-direction: column; padding: 16px 10px 10px 20px; }
.ask { display: flex; justify-content: space-between; align-items: center; padding: 1px 10px 0 1px; font-size: 16px; letter-spacing: -.18px; color: #a3a3a3; }
.row { margin-top: auto; display: flex; align-items: center; letter-spacing: -.19px; font-weight: 500; }
.row svg { fill: none; stroke: #f3f3f3; stroke-width: 1.500; stroke-linecap: round; }
.row span { padding-bottom: 1px; }
.sliders { margin: 0 8px 0 20px; }
.mic { margin: 0 16px 0 auto; }
.voice { width: 36px; height: 36px; border-radius: 50%; background: #555; display: grid; place-items: center; }
.row .voice svg { stroke: #ccc; }
footer { height: 32px; flex: none; text-align: center; font-size: 12px; line-height: 33px; letter-spacing: -.25px; }
.right { display: flex; justify-content: flex-end; }
.headacts { height: 52px; display: flex; align-items: center; letter-spacing: -.33px; padding-bottom: 1px; }
.headacts b { font-weight: 600; margin-left: 6px; }
.dots { margin: 0 24px 0 23px; }
.avatar { width: 24px; height: 24px; border-radius: 50%; background: #f59e0b; font-size: 10px; letter-spacing: -.3px; color: #ffe9c4; display: grid; place-items: center; }
.page { width: 14px; padding: 6px 0 8px 0; }
.page u { height: 147px; margin-top: 663px; }

/* Sound dialog */
.dialog { position: absolute; left: 164px; top: 157px; width: 398px; height: 453px; background: #f0f0f0; color: #000; box-shadow: 0 0 0 1px #1114, 0 4px 14px #0008; font-size: 11px; letter-spacing: .1px; display: flex; flex-direction: column; padding: 0 8px 8px 6px; }
.caption { height: 30px; margin: 0 -8px 0 -6px; padding: 0 10px 2px 9px; background: #fff; display: flex; align-items: center; gap: 6px; font-size: 12px; letter-spacing: -.2px; flex: none; }
.caption span { flex: 1; }
.tabs { height: 27px; flex: none; display: flex; align-items: flex-end; padding-left: 2px; }
.tabs span { height: 18px; line-height: 18px; border: 1px solid #d9d9d9; border-width: 1px 1px 0 0; text-align: center; width: 87px; letter-spacing: -.68px; color: #0b0b28; }
.tabs span:first-child { border-left-width: 1px; width: 53px; letter-spacing: -.35px; }
.tabs span:nth-child(3) { width: 45px; letter-spacing: -.4px; }
.tabs .sel { height: 21px; width: 63px; background: #fff; margin-bottom: -1px; padding-bottom: 1px; position: relative; letter-spacing: -.25px; }
.panel { height: 359px; flex: none; background: #fff; border: 1px solid #dcdcdc; padding: 0 11px 11px 14px; display: flex; flex-direction: column; }
.panel p { margin: 0; height: 35px; line-height: 38px; white-space: nowrap; letter-spacing: .05px; }
.devices { border: 1px solid #828790; height: 278px; padding: 3px 5px 0 1px; }
.dev { height: 51px; margin-bottom: 2px; display: flex; color: #838383; line-height: 13px; letter-spacing: .16px; }
.dev.sel { background: #e5f3ff; }
.pic { width: 64px; position: relative; }
.pic svg { width: 50px; height: 50px; }
.pic .badge { position: absolute; left: 32px; top: 29px; width: 20px; height: 20px; }
.pic .off { opacity: .45; }
.txt { padding-top: 6px; flex: 1; white-space: nowrap; }
.txt b { display: block; font-weight: 400; color: #000; }
.meter { width: 14px; height: 39px; margin: 5px 6px 0 0; background: repeating-linear-gradient(#b0d2e2 0 3px, transparent 3px 4px); }
.btns { display: flex; margin-top: auto; padding-right: 1px; }
.btn { width: 73px; height: 21px; border: 1px solid #adadad; background: #e1e1e1; display: flex; align-items: center; justify-content: center; letter-spacing: .04px; padding: 0 1px 1px 0; white-space: nowrap; }
.btns .btn:first-child { margin-left: 1px; }
.grey { background: #ccc; border-color: #bfbfbf; color: #838383; }
.split { width: 88px; margin: 0 8px 0 auto; justify-content: flex-end; letter-spacing: .16px; }
.split em { width: 2px; height: 15px; background: #999; border-right: 1px solid #fff; margin: 0 2px 0 8px; }
.okrow { display: flex; justify-content: flex-end; gap: 8px; margin: 8px -1px 0 0; }
.okrow .btn { letter-spacing: -.45px; padding-right: 2px; }
.btn.ok { border: 2px solid #0078d7; }

/* taskbar */
.taskbar { height: 40px; flex: none; display: flex; align-items: center; position: relative; font-size: 12px; }
.wall { position: absolute; left: 0; top: 0; }
.tb-left, .tb-apps, .tray, .mid { position: relative; }
.tb-left { flex: none; width: 592px; display: flex; align-items: center; padding-left: 16px; letter-spacing: -.2px; color: #dfe3ea; }
.tb-left svg + svg { margin-left: 29px; }
.grip { width: 4px; height: 16px; border: 1px solid #5d6b8a; border-width: 0 1px; margin: 0 9px 0 18px; }
.grip.mid { margin: 0 12px 0 0; }
.tb-apps { display: flex; height: 40px; }
.tb-apps span { width: 48.920px; padding: 0 4.460px; display: grid; place-items: center; }
.tb-apps svg { width: 24px; height: 24px; }
.tb-apps .run { background: linear-gradient(#76b9ed, #76b9ed) center bottom / 40px 2px no-repeat; }
.tb-apps .cur { background: linear-gradient(#76b9ed, #76b9ed) bottom / 100% 2px no-repeat, #ffffff30; }
.epic { font: 700 9.500px "Liberation Sans", sans-serif; fill: #fff; }
.games { font: 700 4.500px "Liberation Sans", sans-serif; fill: #fff; }
.tray { margin-left: auto; display: flex; align-items: center; height: 40px; }
.tray svg { fill: none; stroke: #fff; stroke-width: 1.300; }
.net { margin: 0 7px 0 9px; }
.clock { width: 76px; display: flex; flex-direction: column; align-items: center; gap: 2px; line-height: 16px; letter-spacing: -.62px; margin-top: -1px; }
.note { margin: 0 20px 0 8px; }
.tray i { width: 1px; height: 40px; background: #7d93b0; margin-right: 4px; }
```
